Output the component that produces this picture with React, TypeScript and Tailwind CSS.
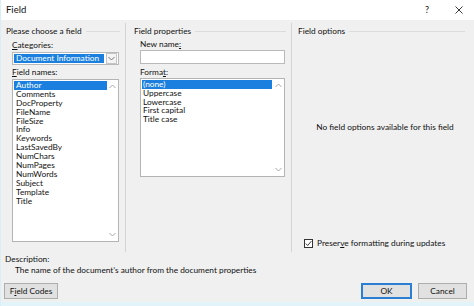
import React from "react";

const Up = () => (
  <svg width="7" height="5" viewBox="0 0 7 5" className="block">
    <path d="M0.5 4 L3.5 1 L6.5 4" fill="none" stroke="#a8a8a8" strokeWidth="1" />
  </svg>
);
const Down = ({ c = "#a8a8a8" }: { c?: string }) => (
  <svg width="7" height="5" viewBox="0 0 7 5" className="block">
    <path d="M0.5 1 L3.5 4 L6.5 1" fill="none" stroke={c} strokeWidth="1" />
  </svg>
);

const Header = ({ text, pr }: { text: string; pr: string }) => (
  <div className={`flex items-center h-[10px] leading-[10px] mt-[3px] ${pr}`}>
    <span className="whitespace-nowrap">{text}</span>
    <div className="flex-1 h-px bg-[#dcdcdc] ml-[4px]" />
  </div>
);

const fields = [
  "Author",
  "Comments",
  "DocProperty",
  "FileName",
  "FileSize",
  "Info",
  "Keywords",
  "LastSavedBy",
  "NumChars",
  "NumPages",
  "NumWords",
  "Subject",
  "Template",
  "Title",
];
const formats = ["(none)", "Uppercase", "Lowercase", "First capital", "Title case"];

export default function App() {
  return (
    <div
      className="w-[474px] h-[306px] bg-[#f0f0f0] flex flex-col text-[8.3px] text-[#111] overflow-hidden border-l border-[#d9eef8]"
      style={{ fontFamily: 'Lato, "Noto Sans", sans-serif' }}
    >
      {/* title bar */}
      <div className="h-[20px] bg-white flex items-center shrink-0">
        <span className="pl-[5px] text-[9.5px] leading-[10px]">Field</span>
        <span className="ml-auto text-[9px] leading-[10px] mr-[26px]">?</span>
        <svg width="8" height="8" viewBox="0 0 8 8" className="mr-[11px]">
          <path d="M0.5 0.5 L7.5 7.5 M7.5 0.5 L0.5 7.5" stroke="#222" strokeWidth="0.9" />
        </svg>
      </div>

      {/* panels */}
      <div className="flex h-[232px] pt-[3px] shrink-0">
        {/* left panel */}
        <div className="w-[125px] border-r border-[#d4d4d4] pl-[5px] flex flex-col">
          <Header text="Please choose a field" pr="pr-[5px]" />
          <div className="mt-[4px] h-[10px] leading-[10px] pl-[6px]">
            <span className="underline">C</span>ategories:
          </div>
          <div className="mt-[2px] ml-[6px] w-[107px] h-[13px] bg-white border border-[#b9b9b9] flex items-center pl-[1px] pr-[1px]">
            <div className="w-[90px] h-[9px] bg-[#1a7fde] text-white leading-[9px] pl-[2px] whitespace-nowrap overflow-hidden">
              Document Information
            </div>
            <div className="ml-auto w-[11px] h-[11px] border border-[#c4c4c4] bg-[#f4f4f4] flex items-center justify-center">
              <Down c="#777" />
            </div>
          </div>
          <div className="mt-[2px] h-[10px] leading-[10px] pl-[6px]">
            <span className="underline">F</span>ield names:
          </div>
          <div className="mt-[2px] ml-[6px] w-[107px] h-[163px] bg-white border border-[#b4b4b4] flex">
            <div className="flex-1 pt-[1px] pl-[1px]">
              {fields.map((f, i) => (
                <div
                  key={f}
                  className={`h-[8.9px] leading-[8.9px] pl-[2px] whitespace-nowrap ${
                    i === 0 ? "bg-[#1a7fde] text-white" : ""
                  }`}
                >
                  {f}
                </div>
              ))}
            </div>
            <div className="w-[11px] flex flex-col items-center justify-between py-[4px]">
              <Up />
              <Down />
            </div>
          </div>
        </div>

        {/* middle panel */}
        <div className="w-[166px] border-r border-[#d4d4d4] pl-[8px] flex flex-col">
          <Header text="Field properties" pr="pr-[5px]" />
          <div className="mt-[3px] h-[10px] leading-[10px] pl-[6px]">
            New name<span className="underline">:</span>
          </div>
          <div className="mt-[1px] ml-[6px] w-[145px] h-[14px] bg-white border border-[#b9b9b9]" />
          <div className="mt-[3px] h-[10px] leading-[10px] pl-[6px]">
            Forma<span className="underline">t</span>:
          </div>
          <div className="mt-[1px] ml-[6px] w-[145px] h-[99px] bg-white border border-[#b4b4b4] flex">
            <div className="flex-1 pt-[1px] pl-[1px]">
              {formats.map((f, i) => (
                <div
                  key={f}
                  className={`h-[8.8px] leading-[8.8px] pl-[1px] whitespace-nowrap ${
                    i === 0 ? "bg-[#1a7fde] text-white" : ""
                  }`}
                >
                  {f}
                </div>
              ))}
            </div>
            <div className="w-[12px] flex flex-col items-center justify-between py-[4px]">
              <Up />
              <Down />
            </div>
          </div>
        </div>

        {/* right panel */}
        <div className="flex-1 pl-[6px] flex flex-col">
          <Header text="Field options" pr="pr-[9px]" />
          <div className="mt-[86px] h-[10px] leading-[10px] text-center pr-[2px] whitespace-nowrap">
            No field options available for this field
          </div>
          <div className="mt-auto mb-[4px] ml-[6px] flex items-center h-[10px]">
            <div className="w-[9px] h-[9px] border border-[#333] bg-white flex items-center justify-center">
              <svg width="7" height="7" viewBox="0 0 7 7">
                <path d="M0.8 3.6 L2.7 5.5 L6.3 1.2" fill="none" stroke="#222" strokeWidth="0.9" />
              </svg>
            </div>
            <span className="ml-[4px] leading-[10px] whitespace-nowrap">
              Preser<span className="underline">v</span>e formatting during updates
            </span>
          </div>
        </div>
      </div>

      {/* description */}
      <div className="mt-[2px] h-[10px] leading-[10px] pl-[4px]">Description:</div>
      <div className="mt-[1px] h-[10px] leading-[10px] pl-[14px] whitespace-nowrap">
        The name of the document’s author from the document properties
      </div>

      {/* buttons */}
      <div className="mt-[8px] h-[16px] flex items-center pl-[3px] pr-[7px]">
        <div className="w-[54px] h-[16px] bg-[#e1e1e1] border border-[#adadad] flex items-center justify-center leading-[10px]">
          F<span className="underline">i</span>eld Codes
        </div>
        <div className="ml-auto w-[51px] h-[16px] bg-[#e1e1e1] border-2 border-[#2a7fd4] flex items-center justify-center leading-[10px]">
          OK
        </div>
        <div className="ml-[6px] w-[49px] h-[16px] bg-[#e1e1e1] border border-[#adadad] flex items-center justify-center leading-[10px]">
          Cancel
        </div>
      </div>
      <div className="mt-auto h-[4px] bg-[#e2f3fa]" />
    </div>
  );
}
